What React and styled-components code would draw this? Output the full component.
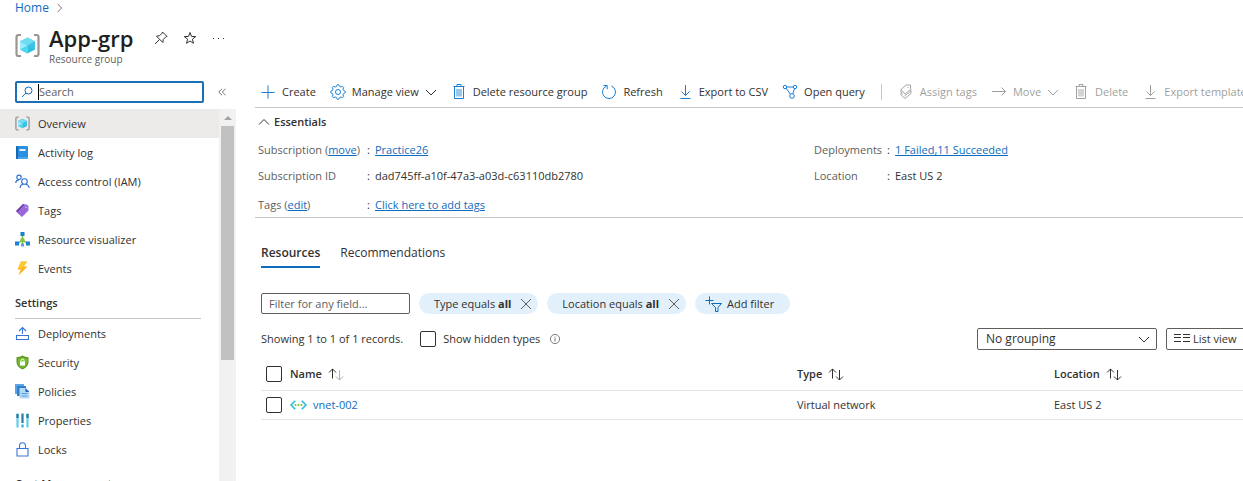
import React from "react";
import styled, { createGlobalStyle } from "styled-components";

const GlobalStyle = createGlobalStyle`
  * { box-sizing: border-box; }
  body {
    margin: 0;
    background: #fff;
    color: #323130;
    font-family: "Open Sans", "Noto Sans", sans-serif;
    font-size: 11px;
    line-height: 16px;
    overflow: hidden;
  }
  button, input, select { font: inherit; color: inherit; }
  svg { display: block; flex: none; overflow: visible; }
`;

const Page = styled.div`
  display: flex;
  flex-direction: column;
  height: 100vh;
  overflow: hidden;
`;

const Link = styled.a`
  color: #0f6cbd;
  text-decoration: ${(p) => (p.$plain ? "none" : "underline")};
`;

const Breadcrumb = styled.nav`
  display: flex;
  align-items: center;
  gap: 6px;
  height: 16px;
  padding-left: 15px;
  flex: none;
  font-size: 12px;
  color: #605e5c;
`;

const TitleBar = styled.header`
  display: flex;
  align-items: flex-start;
  height: 59px;
  padding: 8px 0 0 15px;
  flex: none;
`;

const TitleIcon = styled.div`
  padding-top: 9px;
  margin-right: 9px;
`;

const TitleText = styled.div`
  display: flex;
  flex-direction: column;
`;

const Title = styled.h1`
  margin: 0;
  font-size: 22px;
  line-height: 28px;
  font-weight: 600;
  color: #201f1e;
`;

const Subtitle = styled.span`
  font-size: 10px;
  line-height: 14px;
  color: #605e5c;
`;

const TitleActions = styled.div`
  display: flex;
  gap: 13px;
  margin-left: 20px;
  padding-top: 6px;
`;

const IconButton = styled.button`
  display: flex;
  align-items: center;
  justify-content: center;
  width: ${(p) => p.$size || 16}px;
  height: ${(p) => p.$size || 16}px;
  padding: 0;
  border: 0;
  background: none;
  color: ${(p) => p.$color || "#323130"};
`;

const Body = styled.div`
  display: flex;
  flex: 1;
  min-height: 0;
`;

const Sidebar = styled.aside`
  display: flex;
  flex-direction: column;
  width: 236px;
  flex: none;
  padding-top: 6px;
`;

const SearchRow = styled.div`
  display: flex;
  align-items: center;
  gap: 10px;
  padding-left: 15px;
  margin-bottom: 6px;
  flex: none;
`;

const SearchBox = styled.label`
  display: flex;
  align-items: center;
  width: 189px;
  height: 22px;
  padding: 0 4px;
  border: 2px solid #1a6fb5;
  border-radius: 2px;
  color: #0f6cbd;
`;

const Caret = styled.span`
  width: 1px;
  height: 16px;
  margin-left: 5px;
  background: #000;
`;

const BareInput = styled.input`
  flex: 1;
  min-width: 0;
  padding: 0;
  border: 0;
  outline: 0;
  background: none;
  color: #323130;
  &::placeholder { color: #605e5c; opacity: 1; }
`;

const MenuArea = styled.div`
  display: flex;
  flex: 1;
  min-height: 0;
`;

const Menu = styled.nav`
  flex: 1;
  overflow: hidden;
`;

const MenuItem = styled.a`
  display: flex;
  align-items: center;
  gap: 8px;
  height: 29px;
  padding-left: 15px;
  color: #323130;
  text-decoration: none;
  background: ${(p) => (p.$active ? "#edebe9" : "transparent")};
`;

const MenuHeading = styled.h2`
  margin: 12px 18px 0 15px;
  padding-bottom: 7px;
  border-bottom: 1px solid #c8c6c4;
  font-size: 11px;
  line-height: 16px;
  font-weight: 600;
`;

const ScrollTrack = styled.div`
  display: flex;
  flex-direction: column;
  align-items: center;
  width: 17px;
  background: #f1f1f1;
`;

const ScrollArrow = styled.div`
  display: flex;
  align-items: center;
  height: 17px;
`;

const ScrollThumb = styled.div`
  width: 13px;
  height: 234px;
  background: #c1c1c1;
`;

const Main = styled.main`
  flex: 1;
  min-width: 0;
  padding-left: 19px;
  overflow: hidden;
`;

const Toolbar = styled.div`
  display: flex;
  align-items: center;
  gap: 14px;
  height: 33px;
  padding: 1px 0 0 5px;
  border-bottom: 1px solid #c8c6c4;
  white-space: nowrap;
`;

const ToolButton = styled.button`
  display: flex;
  align-items: center;
  flex: none;
  gap: 6px;
  padding: 0;
  border: 0;
  background: none;
  color: ${(p) => (p.disabled ? "#a19f9d" : "#323130")};
  > svg:first-child { color: ${(p) => (p.disabled ? "#a19f9d" : "#1a7fd4")}; }
`;

const Divider = styled.span`
  flex: none;
  width: 1px;
  height: 16px;
  margin: 0 2px;
  background: #c8c6c4;
`;

const Essentials = styled.section`
  padding: 6px 0 4px 3px;
  border-bottom: 1px solid #c8c6c4;
`;

const EssentialsToggle = styled.button`
  display: flex;
  align-items: center;
  gap: 4px;
  height: 16px;
  padding: 0;
  border: 0;
  background: none;
  font-weight: 600;
`;

const EssentialsGrid = styled.div`
  display: grid;
  grid-template-columns: 556fr 429fr;
  padding-top: 12px;
`;

const Facts = styled.dl`
  margin: 0;
`;

const Fact = styled.div`
  display: grid;
  grid-template-columns: ${(p) => p.$label}px 1fr;
  margin-bottom: ${(p) => p.$gap || 0}px;
  white-space: nowrap;
  dt { color: #605e5c; }
  dd { display: flex; margin: 0; }
  dd::before { content: ":"; width: 8px; }
`;

const Content = styled.div`
  padding-left: 6px;
`;

const Tabs = styled.div`
  display: flex;
  gap: 20px;
  padding-top: 27px;
`;

const Tab = styled.button`
  padding: 0 0 5px;
  border: 0;
  border-bottom: 2px solid ${(p) => (p.$active ? "#0f6cbd" : "transparent")};
  background: none;
  font-size: 12px;
  font-weight: ${(p) => (p.$active ? 600 : 400)};
`;

const Filters = styled.div`
  display: flex;
  align-items: center;
  gap: 9px;
  margin-top: 25px;
`;

const FilterInput = styled.input`
  width: 149px;
  height: 21px;
  padding: 0 7px;
  border: 1px solid #605e5c;
  border-radius: 2px;
  &::placeholder { color: #605e5c; opacity: 1; }
`;

const Pill = styled.div`
  display: flex;
  align-items: center;
  gap: 9px;
  height: 21px;
  padding: 0 6px 0 15px;
  border-radius: 11px;
  background: #e2f0fb;
`;

const PillButton = styled.button`
  display: flex;
  align-items: center;
  gap: 4px;
  height: 21px;
  padding: 0 16px 0 10px;
  border: 0;
  border-radius: 11px;
  background: #e2f0fb;
`;

const Records = styled.div`
  display: flex;
  align-items: center;
  height: 22px;
  margin-top: 14px;
  margin-right: -12px;
  white-space: nowrap;
`;

const CheckLabel = styled.label`
  display: flex;
  align-items: center;
  gap: 7px;
  margin: 0 10px 0 17px;
`;

const Checkbox = styled.input`
  appearance: none;
  display: block;
  width: 16px;
  height: 16px;
  margin: 0;
  border: 1px solid #323130;
  border-radius: 2px;
  background: #fff;
`;

const SelectWrap = styled.div`
  display: grid;
  align-items: center;
  width: 180px;
  height: 22px;
  margin: 0 9px 0 auto;
  > * { grid-area: 1 / 1; }
  > svg { justify-self: end; margin-right: 7px; pointer-events: none; }
`;

const Select = styled.select`
  appearance: none;
  width: 100%;
  height: 22px;
  padding: 0 8px;
  border: 1px solid #605e5c;
  border-radius: 2px;
  background: #fff;
  font-size: 12px;
`;

const ViewButton = styled.button`
  display: flex;
  align-items: center;
  gap: 3px;
  width: 89px;
  height: 22px;
  padding: 0 7px;
  border: 1px solid #605e5c;
  border-radius: 2px;
  background: #fff;
`;

const Table = styled.table`
  width: 100%;
  margin-top: 8px;
  border-collapse: collapse;
  table-layout: fixed;
  text-align: left;
  th, td { padding: 0; border-bottom: 1px solid #e6e5e3; }
  th { height: 32px; font-weight: 600; }
  td { height: 29px; }
  th:first-child, td:first-child { padding-left: 5px; }
`;

const Col = styled.col`
  width: ${(p) => (p.$width ? `${p.$width}px` : "auto")};
`;

const Cell = styled.div`
  display: flex;
  align-items: center;
  gap: 6px;
`;

/* ---------- icons ---------- */

const Icon = ({ size = 16, w, children, ...rest }) => (
  <svg width={w || size} height={size} viewBox={`0 0 ${w || size} ${size}`} fill="none" stroke="currentColor" aria-hidden="true" {...rest}>
    {children}
  </svg>
);

const GroupIcon = ({ size }) => (
  <svg width={size} height={size} viewBox="0 0 25 25" aria-hidden="true">
    <path d="M6 2H3.500Q1.500 2 1.500 4V21Q1.500 23 3.500 23H6M19 2H21.500Q23.500 2 23.500 4V21Q23.500 23 21.500 23H19" fill="none" stroke="#9a9593" strokeWidth="2.200" />
    <path d="M12.500 4.500 20 8.500V16.500L12.500 20.500 5 16.500V8.500Z" fill="#32bedd" />
    <path d="M12.500 4.500 20 8.500 12.500 12.500 5 8.500Z" fill="#6fdcf4" />
    <path d="M5 8.500 12.500 12.500V20.500L5 16.500Z" fill="#9cebff" />
    <path d="M5 16.500 12.500 12.500V20.500Z" fill="#50d3ee" />
    <path d="M20 8.500V16.500L12.500 12.500Z" fill="#3cc4e6" />
  </svg>
);
const Pin = () => (
  <Icon size={14}><path d="M8.500 1 13 5.500 11.800 5.900 9.300 8.400 8.800 11.500 2.500 5.200 5.600 4.700 8.100 2.200ZM5.500 8.500 1 13" /></Icon>
);
const Star = () => (
  <Icon size={14}><path d="M7 1.500 8.500 5.400 12.700 5.600 9.400 8.200 10.500 12.300 7 10 3.500 12.300 4.600 8.200 1.300 5.600 5.500 5.400Z" /></Icon>
);
const Dots = () => (
  <Icon size={14} stroke="none" fill="currentColor"><path d="M1 7h1v1H1zM6 7h1v1H6zM11 7h1v1H11z" /></Icon>
);
const SearchIcon = () => (
  <Icon size={12}><circle cx="7.500" cy="4.500" r="3.500" /><path d="M5 7 1 11" /></Icon>
);
const Chevron = ({ d = "down", size = 12 }) => (
  <Icon size={size} viewBox="0 0 12 12">
    <path d={{ down: "M1 4 6 9 11 4", up: "M1 8.500 6 3.500 11 8.500", right: "M3 1 8 6 3 11" }[d]} />
  </Icon>
);
const Collapse = () => <Icon size={8} strokeWidth=".9"><path d="M4 .8.800 4 4 7.200M7.500.8 4.300 4 7.500 7.200" /></Icon>;
const Plus = () => <Icon><path d="M8 1.500V14.500M1.500 8.500H14.500" /></Icon>;

/* Outline of a cog with eight flat teeth. */
const gearPath = Array.from({ length: 32 }, (_, i) => {
  const r = i % 4 < 2 ? 7.3 : 5.7;
  const a = ((i - 0.5) * Math.PI) / 16;
  return `${i ? "L" : "M"}${(8 + r * Math.cos(a)).toFixed(2)} ${(8 + r * Math.sin(a)).toFixed(2)}`;
}).join("") + "Z";
const Gear = () => (
  <Icon>
    <path d={gearPath} strokeLinejoin="round" />
    <circle cx="8" cy="8" r="2.500" />
  </Icon>
);
const Trash = () => (
  <Icon><path d="M2.500 2.500H13.500M6 2.500V.5H10V2.500M3.500 2.500V14.500H12.500V2.500" /><path d="M6 5V12.500M8 5V12.500M10 5V12.500" strokeWidth=".9" /></Icon>
);
const Refresh = () => (
  <Icon><path d="M5.600 2A6.500 6.500 0 1 0 10.400 2M2.500 1.500H6.200V5.200" /></Icon>
);
const Download = () => (
  <Icon><path d="M8.500 1V11.500M4.500 7.500 8.500 11.500 12.500 7.500M3.500 14.500H13.500" /></Icon>
);
const Query = () => (
  <Icon>
    <circle cx="3" cy="3" r="1.700" /><circle cx="13" cy="3" r="1.700" /><circle cx="10" cy="12" r="2.300" />
    <path d="M4.700 3H11.300M4.200 4.200 8.400 10.300M12.500 4.700 10.800 9.800" />
  </Icon>
);
const TagsOutline = () => (
  <Icon strokeWidth=".9"><path d="M3 5.500 8 1H12.500V5.500L7 10ZM3 5.500V8L4.500 10M3 8.500V11L7 14.500 13 9.500V5.500M6.500 12 13 7M9.500 3.500H10.500" /></Icon>
);
const ArrowRight = () => <Icon><path d="M1 7.500H14.500M10.500 3.500 14.500 7.500 10.500 11.500" /></Icon>;
const Close = () => <Icon size={12}><path d="M1 1 11 11M11 1 1 11" stroke="#605e5c" /></Icon>;
const AddFilter = () => (
  <Icon w={18} size={16} stroke="#0f6cbd"><path d="M4.500.500V8.500M.500 4.500H8.500M6.500 7.500H16.500L13 11.500V15.500H10.500V11.500Z" /></Icon>
);
const Info = () => (
  <Icon size={10} stroke="#605e5c"><circle cx="5" cy="5" r="4.600" strokeWidth=".8" /><path d="M5 4.300V7.500M5 2.500V3.400" strokeWidth=".9" /></Icon>
);
const ListIcon = () => (
  <Icon size={16}><path d="M0 3.500H7M9 3.500H16M0 6.500H7M9 6.500H16M0 10.500H7M9 10.500H16" /></Icon>
);
const Sort = ({ faded }) => (
  <Icon w={16} size={12}>
    <path d="M4.500 10.500V.8M1 4.500 4.500 1 8 4.500" />
    <path d="M11.500 2V12M8 8.500 11.500 12 15 8.500" stroke={faded ? "#b3b0ad" : "currentColor"} />
  </Icon>
);
const VNet = () => (
  <svg width="17" height="12" viewBox="0 0 18 12" fill="none" aria-hidden="true">
    <path d="M5.500 1.500 1.200 6 5.500 10.500M12.500 1.500 16.800 6 12.500 10.500" stroke="#32bedd" strokeWidth="1.800" />
    <circle cx="5.800" cy="6" r="1.100" fill="#76bc2d" /><circle cx="9" cy="6" r="1.100" fill="#76bc2d" /><circle cx="12.200" cy="6" r="1.100" fill="#76bc2d" />
  </svg>
);

const Art = ({ children }) => (
  <svg width="15" height="15" viewBox="0 0 15 15" fill="none" aria-hidden="true">{children}</svg>
);
const ActivityIcon = () => (
  <Art>
    <rect x="1" y="1" width="12" height="13" rx="1" fill="#2b8fe0" />
    <path d="M1 2Q1 1 2 1H3V14H2Q1 14 1 13Z" fill="#1669b0" />
    <rect x="4.500" y="4" width="6" height="2" fill="#e3f2fd" />
    <path d="M3 12H13V13Q13 14 12 14H3Z" fill="#4aa6ec" />
  </Art>
);
const PeopleIcon = () => (
  <Art>
    <g stroke="#2f6fcf" strokeWidth="1.100">
      <circle cx="4" cy="3.300" r="2.200" /><path d="M.7 9Q1 6 4 5.900" />
      <circle cx="9.500" cy="7.500" r="2.800" /><path d="M5 14Q5.300 10.600 8 10.200M11 10.200Q13.800 10.800 14.200 14" />
    </g>
  </Art>
);
const TagIcon = () => (
  <Art>
    <path d="M1 8 8 1 12 1.500 13.500 3V7.500L7 14Z" fill="#a67af4" />
    <path d="M1 8 8 1 9.500 1.500 3 9ZM1 8 3 9 7 14Z" fill="#6b3fa8" />
    <path d="M3 9 9.500 2.500 13 3V7.500L7 13.500Z" fill="#9a66d8" />
    <circle cx="11" cy="4.500" r=".7" fill="#e6d8fa" />
  </Art>
);
const VisualIcon = () => (
  <Art>
    <path d="M7.500 4V9M7.500 8 2.500 11.500M7.500 8 12.500 11.500M7.500 8V12" stroke="#76bc2d" strokeWidth="1.400" />
    <rect x="5.500" y="0" width="4" height="4" fill="#1a80d0" /><circle cx="7.500" cy="8" r="2.200" fill="#86c940" />
    <rect x="0" y="9.500" width="4" height="4" fill="#1a80d0" /><rect x="11" y="9.500" width="4" height="4" fill="#1a80d0" />
    <rect x="6" y="11.500" width="3" height="3" fill="#5ea0ef" />
  </Art>
);
const BoltIcon = () => (
  <Art><path d="M6 .5H12L8.800 5.500H12.500L3.500 14.500 5.800 8.500H2.500Z" fill="#fbb41c" /><path d="M6 .5H12L8.800 5.500 2.500 8.500Z" fill="#fdc834" /></Art>
);
const DeployIcon = () => (
  <Art><path d="M1.500 9.500H13.500V13.500H1.500ZM7.500 8V1.500M4 5 7.500 1.500 11 5" stroke="#3a74d8" strokeWidth="1.100" /></Art>
);
const ShieldIcon = () => (
  <Art>
    <path d="M7.500 .5Q10 2.300 13.500 2.300V7Q13.500 12 7.500 14.500 1.500 12 1.500 7V2.300Q5 2.300 7.500 .5Z" fill="#5e9624" />
    <path d="M7.500 2.200Q9.500 3.500 12.200 3.600V7Q12.200 11 7.500 13 2.800 11 2.800 7V3.600Q5.500 3.500 7.500 2.200Z" fill="#76bc2d" />
    <rect x="5" y="6.500" width="5" height="4" rx=".5" fill="#fff" /><path d="M6 6.500V5.500A1.500 1.500 0 0 1 9 5.500V6.500" stroke="#fff" />
  </Art>
);
const PolicyIcon = () => (
  <Art>
    <path d="M0 0H9V10H0Z" fill="#5aa6e8" /><path d="M2 2H11V12H2Z" fill="#2f7fcb" />
    <path d="M4.500 4H10.500L14.500 8V14.500H4.500Z" fill="#b5d8f6" /><path d="M10.500 4 14.500 8H10.500Z" fill="#1a66b8" />
    <path d="M6.500 9.500H12.500M6.500 12H12.500" stroke="#5a9fe0" />
  </Art>
);
const PropsIcon = () => (
  <Art>
    <path d="M2.500 .5V14.500M12.500 .5V14.500" stroke="#5fcdeb" strokeWidth="2.200" /><path d="M7.500 .5V10M2.500 1V5M12.500 1V5" stroke="#2a789f" strokeWidth="2.200" />
    <path d="M7.500 11.500V14.500" stroke="#32a9dc" strokeWidth="2.200" />
  </Art>
);
const LockIcon = () => (
  <Art><path d="M2 6.500H13V14H2ZM4.500 6.500V4A3 3.300 0 0 1 10.500 4V6.500" stroke="#3a74d8" strokeWidth="1.100" /></Art>
);

const overviewItems = [
  ["Overview", <GroupIcon size={15} />],
  ["Activity log", <ActivityIcon />],
  ["Access control (IAM)", <PeopleIcon />],
  ["Tags", <TagIcon />],
  ["Resource visualizer", <VisualIcon />],
  ["Events", <BoltIcon />],
];
const settingsItems = [
  ["Deployments", <DeployIcon />],
  ["Security", <ShieldIcon />],
  ["Policies", <PolicyIcon />],
  ["Properties", <PropsIcon />],
  ["Locks", <LockIcon />],
];

const MenuList = ({ items, active }) =>
  items.map(([label, icon]) => (
    <MenuItem key={label} href="#" $active={label === active}>
      {icon}
      {label}
    </MenuItem>
  ));

export default function App() {
  return (
    <Page>
      <GlobalStyle />
      <Breadcrumb aria-label="Breadcrumb">
        <Link href="#" $plain>Home</Link>
        <Chevron d="right" size={10} />
      </Breadcrumb>
      <TitleBar>
        <TitleIcon><GroupIcon size={25} /></TitleIcon>
        <TitleText>
          <Title>App-grp</Title>
          <Subtitle>Resource group</Subtitle>
        </TitleText>
        <TitleActions>
          <IconButton aria-label="Pin"><Pin /></IconButton>
          <IconButton aria-label="Favorite"><Star /></IconButton>
          <IconButton aria-label="More"><Dots /></IconButton>
        </TitleActions>
      </TitleBar>
      <Body>
        <Sidebar>
          <SearchRow>
            <SearchBox>
              <SearchIcon />
              <Caret />
              <BareInput type="text" placeholder="Search" aria-label="Search" />
            </SearchBox>
            <IconButton aria-label="Collapse menu" $color="#605e5c"><Collapse /></IconButton>
          </SearchRow>
          <MenuArea>
            <Menu aria-label="Resource menu">
              <MenuList items={overviewItems} active="Overview" />
              <MenuHeading>Settings</MenuHeading>
              <MenuList items={settingsItems} />
              <MenuHeading>Cost Management</MenuHeading>
            </Menu>
            <ScrollTrack aria-hidden="true">
              <ScrollArrow>
                <svg width="8" height="4" viewBox="0 0 8 4"><path d="M4 0 8 4H0Z" fill="#a3a3a3" /></svg>
              </ScrollArrow>
              <ScrollThumb />
            </ScrollTrack>
          </MenuArea>
        </Sidebar>
        <Main>
          <Toolbar>
            <ToolButton><Plus />Create</ToolButton>
            <ToolButton><Gear />Manage view<Chevron /></ToolButton>
            <ToolButton><Trash />Delete resource group</ToolButton>
            <ToolButton><Refresh />Refresh</ToolButton>
            <ToolButton><Download />Export to CSV</ToolButton>
            <ToolButton><Query />Open query</ToolButton>
            <Divider />
            <ToolButton disabled><TagsOutline />Assign tags</ToolButton>
            <ToolButton disabled><ArrowRight />Move<Chevron /></ToolButton>
            <ToolButton disabled><Trash />Delete</ToolButton>
            <ToolButton disabled><Download />Export template</ToolButton>
          </Toolbar>
          <Essentials>
            <EssentialsToggle aria-expanded="true"><Chevron d="up" />Essentials</EssentialsToggle>
            <EssentialsGrid>
              <Facts>
                <Fact $label={109} $gap={10}>
                  <dt>Subscription (<Link href="#">move</Link>)</dt>
                  <dd><Link href="#">Practice26</Link></dd>
                </Fact>
                <Fact $label={109} $gap={13}>
                  <dt>Subscription ID</dt>
                  <dd>dad745ff-a10f-47a3-a03d-c63110db2780</dd>
                </Fact>
                <Fact $label={109}>
                  <dt>Tags (<Link href="#">edit</Link>)</dt>
                  <dd><Link href="#">Click here to add tags</Link></dd>
                </Fact>
              </Facts>
              <Facts>
                <Fact $label={73} $gap={10}>
                  <dt>Deployments</dt>
                  <dd><Link href="#">1 Failed,11 Succeeded</Link></dd>
                </Fact>
                <Fact $label={73}>
                  <dt>Location</dt>
                  <dd>East US 2</dd>
                </Fact>
              </Facts>
            </EssentialsGrid>
          </Essentials>
          <Content>
            <Tabs role="tablist">
              <Tab role="tab" aria-selected="true" $active>Resources</Tab>
              <Tab role="tab" aria-selected="false">Recommendations</Tab>
            </Tabs>
            <Filters>
              <FilterInput type="text" placeholder="Filter for any field..." aria-label="Filter for any field" />
              <Pill>
                <span>Type equals <b>all</b></span>
                <IconButton $size={12} aria-label="Remove type filter"><Close /></IconButton>
              </Pill>
              <Pill>
                <span>Location equals <b>all</b></span>
                <IconButton $size={12} aria-label="Remove location filter"><Close /></IconButton>
              </Pill>
              <PillButton><AddFilter />Add filter</PillButton>
            </Filters>
            <Records>
              <span>Showing 1 to 1 of 1 records.</span>
              <CheckLabel><Checkbox type="checkbox" />Show hidden types</CheckLabel>
              <Info />
              <SelectWrap>
                <Select aria-label="Grouping" defaultValue="none"><option value="none">No grouping</option></Select>
                <Chevron />
              </SelectWrap>
              <ViewButton><ListIcon />List view</ViewButton>
            </Records>
            <Table>
              <colgroup>
                <Col $width={29} />
                <Col />
                <Col $width={257} />
                <Col $width={189} />
              </colgroup>
              <thead>
                <tr>
                  <th><Checkbox type="checkbox" aria-label="Select all" /></th>
                  <th><Cell>Name<Sort faded /></Cell></th>
                  <th><Cell>Type<Sort /></Cell></th>
                  <th><Cell>Location<Sort /></Cell></th>
                </tr>
              </thead>
              <tbody>
                <tr>
                  <td><Checkbox type="checkbox" aria-label="Select vnet-002" /></td>
                  <td><Cell><VNet /><Link href="#" $plain>vnet-002</Link></Cell></td>
                  <td>Virtual network</td>
                  <td>East US 2</td>
                </tr>
              </tbody>
            </Table>
          </Content>
        </Main>
      </Body>
    </Page>
  );
}
